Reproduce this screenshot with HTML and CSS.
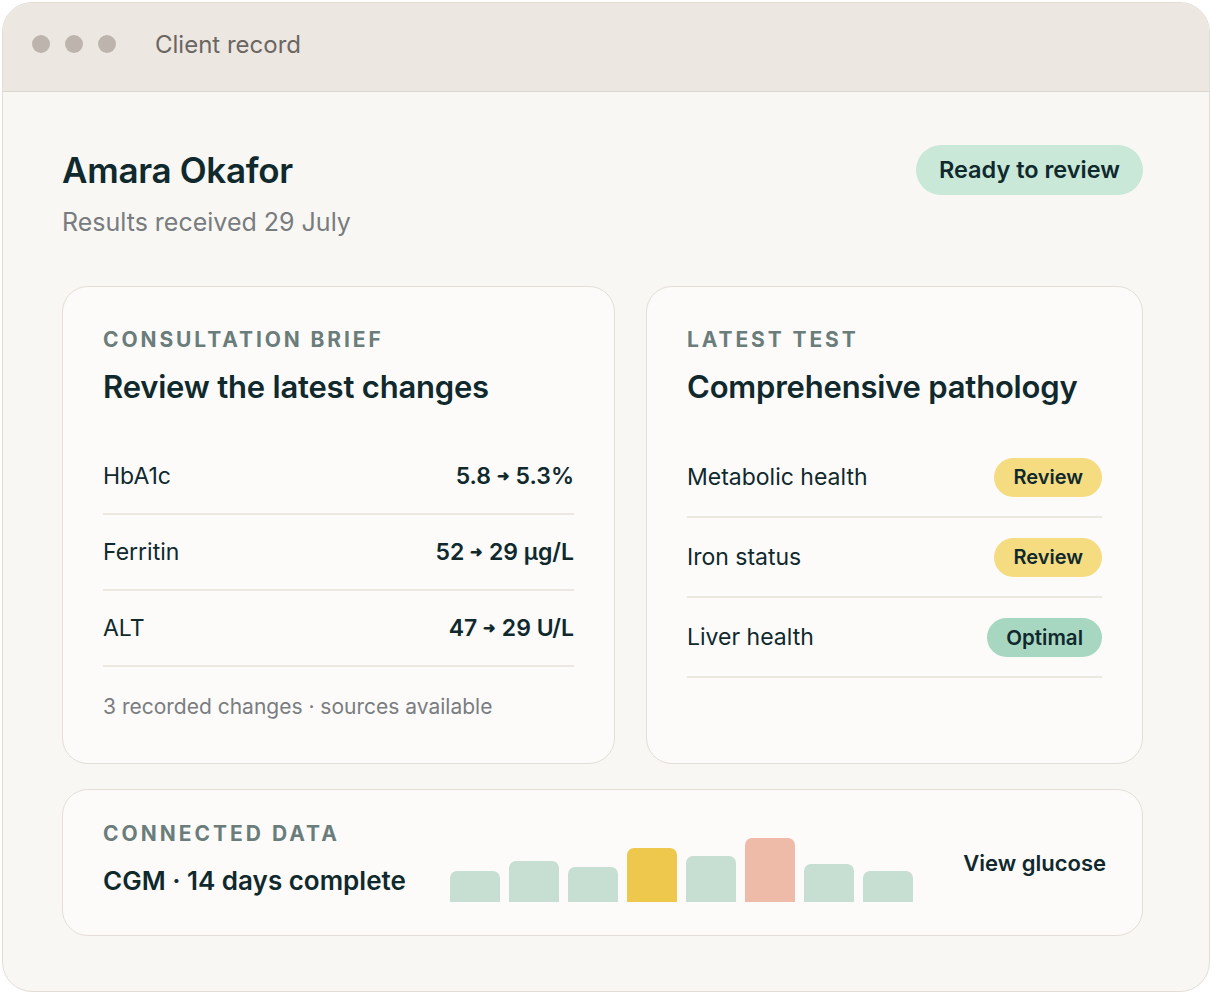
FILE: index.html
```html
<!DOCTYPE html>
<html lang="en">
<head>
    <meta charset="UTF-8">
    <title>Client record</title>
    <link rel="stylesheet" href="styles.css">
</head>
<body>
<div class="window">
    <div class="titlebar">
        <span class="dot"></span><span class="dot"></span><span class="dot"></span>
        <span class="title">Client record</span>
    </div>

    <div class="content">
        <div class="header">
            <div>
                <h1 class="name">Amara Okafor</h1>
                <p class="sub">Results received 29 July</p>
            </div>
            <span class="pill ready">Ready to review</span>
        </div>

        <div class="cards">
            <div class="card">
                <div class="eyebrow">Consultation brief</div>
                <h2 class="card-title">Review the latest changes</h2>
                <div class="rows">
                    <div class="row"><span>HbA1c</span><b>5.8 <i class="arrow">&#10140;</i> 5.3%</b></div>
                    <div class="row"><span>Ferritin</span><b>52 <i class="arrow">&#10140;</i> 29 &micro;g/L</b></div>
                    <div class="row"><span>ALT</span><b>47 <i class="arrow">&#10140;</i> 29 U/L</b></div>
                </div>
                <p class="note">3 recorded changes &middot; sources available</p>
            </div>

            <div class="card">
                <div class="eyebrow">Latest test</div>
                <h2 class="card-title">Comprehensive pathology</h2>
                <div class="rows tall">
                    <div class="row"><span>Metabolic health</span><span class="pill review">Review</span></div>
                    <div class="row"><span>Iron status</span><span class="pill review">Review</span></div>
                    <div class="row"><span>Liver health</span><span class="pill optimal">Optimal</span></div>
                </div>
            </div>
        </div>

        <div class="card wide">
            <div class="cgm">
                <div class="eyebrow">Connected data</div>
                <div class="cgm-title">CGM &middot; 14 days complete</div>
            </div>
            <div class="bars">
                <span class="bar" style="height:31px"></span>
                <span class="bar" style="height:41px"></span>
                <span class="bar" style="height:35px"></span>
                <span class="bar high" style="height:54px"></span>
                <span class="bar" style="height:46px"></span>
                <span class="bar peak" style="height:64px"></span>
                <span class="bar" style="height:38px"></span>
                <span class="bar" style="height:31px"></span>
            </div>
            <a class="link">View glucose</a>
        </div>
    </div>
</div>
</body>
</html>
```

FILE: styles.css
```css
body{
margin:0;
background:#ffffff;
font-family:"Inter","Noto Sans",sans-serif;
color:#0f292d;
}

.window{
margin:2px;
width:1206px;
height:988px;
border:1px solid #e3ddd6;
border-radius:30px;
background:#f8f7f4;
overflow:hidden;
}

.titlebar{
height:82px;
padding:0 0 6px 29px;
background:#ece7e1;
border-bottom:1px solid #ddd6ce;
display:flex;
align-items:center;
}

.dot{
width:18px;
height:18px;
border-radius:50%;
background:#bdb5ad;
margin-right:15px;
}

.title{
margin-left:24px;
font-size:24px;
color:#6b6661;
}

.content{
padding:58px 66px 0 59px;
}

.header{
display:flex;
justify-content:space-between;
align-items:flex-start;
}

.name{
margin:0;
font-size:35px;
font-weight:600;
letter-spacing:-0.3px;
line-height:40px;
}

.sub{
margin:17px 0 0;
font-size:25px;
line-height:30px;
color:#787c7f;
}

.pill{
display:inline-block;
border-radius:30px;
font-weight:600;
color:#0f292d;
}

.ready{
margin-top:-5px;
padding:0 23px;
height:50px;
line-height:50px;
font-size:23.5px;
background:#c9e8d8;
}

.cards{
margin-top:49px;
display:grid;
grid-template-columns:553px 1fr;
gap:31px;
}

.card{
box-sizing:border-box;
background:#fcfbfa;
border:1.5px solid #e5ded6;
border-radius:26px;
padding:41px 40px 0 40px;
height:478px;
}

.eyebrow{
font-size:21px;
line-height:24px;
font-weight:700;
letter-spacing:2.9px;
text-transform:uppercase;
color:#6a7d7b;
}

.card-title{
margin:17px 0 0;
font-size:31px;
line-height:36px;
font-weight:600;
letter-spacing:-0.2px;
}

.rows{
margin-top:34px;
}

.row{
display:flex;
justify-content:space-between;
align-items:center;
height:74px;
border-bottom:2px solid #ece7e1;
font-size:23px;
}

.row b{
font-weight:600;
}

.arrow{
font-style:normal;
font-size:15px;
vertical-align:3px;
}

.tall{
margin-top:33px;
}

.tall .row{
height:78px;
}

.review{
background:#f5dc80;
padding:0 19px;
height:39px;
line-height:39px;
font-size:20px;
}

.optimal{
background:#a8d7c1;
padding:0 19px;
height:39px;
line-height:39px;
font-size:20.5px;
}

.note{
margin:27px 0 0;
font-size:21px;
line-height:26px;
color:#7a7d80;
}

.wide{
margin-top:25px;
height:147px;
padding:32px 36px 33px 40px;
display:flex;
align-items:flex-end;
}

.cgm{
align-self:flex-start;
}

.wide .eyebrow{
letter-spacing:3px;
}

.cgm-title{
margin-top:19px;
font-size:26px;
line-height:32px;
font-weight:600;
}

.bars{
margin-left:44px;
display:flex;
align-items:flex-end;
gap:9px;
}

.bar{
width:50px;
background:#c6dfd2;
border-radius:7px 7px 0 0;
}

.bar.high{
background:#edc84c;
}

.bar.peak{
background:#edbba8;
}

.link{
margin-left:auto;
align-self:flex-start;
margin-top:28px;
font-size:22px;
line-height:26px;
font-weight:600;
}
```
